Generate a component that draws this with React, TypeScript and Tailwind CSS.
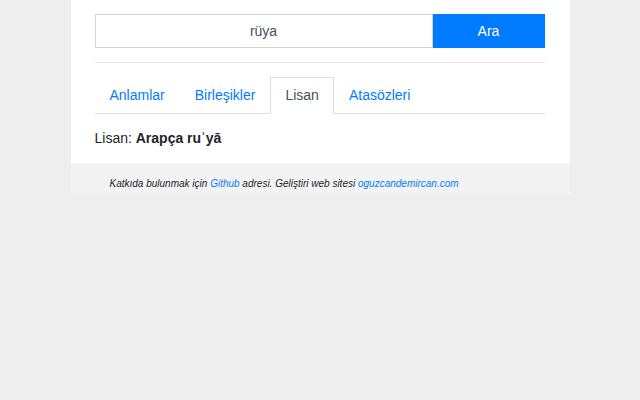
import React, { useState } from "react";

const tabs = ["Anlamlar", "Birleşikler", "Lisan", "Atasözleri"];

export default function App() {
  const [query, setQuery] = useState<string>("rüya");
  const [activeTab, setActiveTab] = useState<string>("Lisan");

  return (
    <div
      className="min-h-screen bg-[#eeeeee] text-[14px] text-[#212529]"
      style={{ fontFamily: '"Liberation Sans", Arial, sans-serif' }}
    >
      <div className="w-[499px] mx-auto">
        <div className="bg-white pl-[24px] pr-[25px] pt-[14px] pb-[14px]">
          <form className="flex h-[34px]" onSubmit={(e) => e.preventDefault()}>
            <input
              value={query}
              onChange={(e) => setQuery(e.target.value)}
              className="flex-1 min-w-0 border border-[#ced4da] text-center text-[14px] text-[#495057] outline-none"
            />
            <button
              type="submit"
              className="w-[112px] bg-[#007bff] text-white text-[14px]"
            >
              Ara
            </button>
          </form>

          <hr className="mt-[14px] border-t border-[#e5e5e5]" />

          <ul className="mt-[14px] flex border-b border-[#dee2e6]">
            {tabs.map((tab) => (
              <li key={tab} className="-mb-px">
                <a
                  href="#"
                  onClick={(e) => {
                    e.preventDefault();
                    setActiveTab(tab);
                  }}
                  className={
                    tab === activeTab
                      ? "block px-[14px] py-[7px] leading-[21px] border border-[#dee2e6] border-b-white bg-white text-[#495057]"
                      : "block px-[14px] py-[7px] leading-[21px] border border-transparent text-[#007bff]"
                  }
                >
                  {tab}
                </a>
              </li>
            ))}
          </ul>

          <p className="mt-[14px] leading-[21px]">
            Lisan: <strong className="font-bold">Arapça ruʾyā</strong>
          </p>
        </div>

        <footer className="bg-[#f3f3f3] h-[31px] pl-[39px] pt-[14px] text-[10px] leading-[13px] italic text-[#212529]">
          Katkıda bulunmak için <a className="text-[#007bff]">Github</a> adresi. Geliştiri web sitesi{" "}
          <a className="text-[#007bff]">oguzcandemircan.com</a>
        </footer>
      </div>
    </div>
  );
}
